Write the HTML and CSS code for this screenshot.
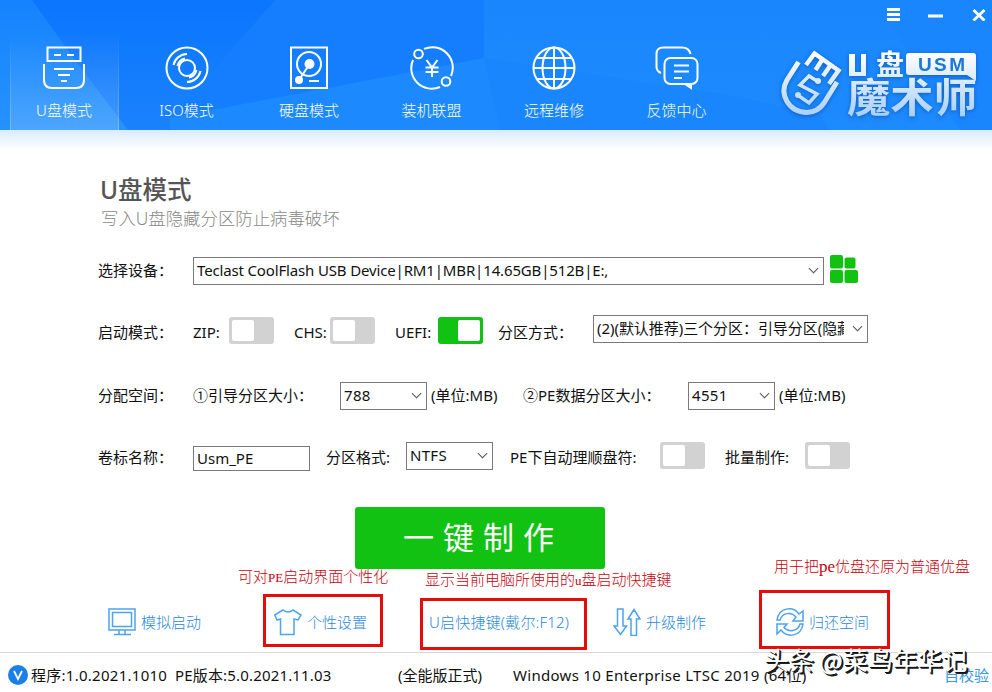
FILE: index.html
```html
<!DOCTYPE html>
<html lang="zh-CN">
<head>
    <meta charset="UTF-8">
    <meta name="viewport" content="width=device-width, initial-scale=1.0">
    <title>U盘魔术师</title>
    <link rel="stylesheet" href="styles.css">
</head>
<body>
    <header class="header">
        <svg class="header-bg" width="992" height="130" viewBox="0 0 992 130">
            <defs>
                <linearGradient id="base" x1="0" y1="0" x2="0" y2="1">
                    <stop offset="0" stop-color="#0b76fe"/>
                    <stop offset="1" stop-color="#1a82fc"/>
                </linearGradient>
                <linearGradient id="side" x1="0" y1="0" x2="0" y2="1">
                    <stop offset="0" stop-color="#1583fd"/>
                    <stop offset="1" stop-color="#2692fd"/>
                </linearGradient>
                <linearGradient id="right" x1="0" y1="0" x2="0" y2="1">
                    <stop offset="0" stop-color="#1a86fe"/>
                    <stop offset="1" stop-color="#1c8bfe"/>
                </linearGradient>
            </defs>
            <rect width="992" height="130" fill="url(#base)"/>
            <path d="M0 0H32L75 60L128 130H0Z" fill="url(#side)"/>
            <path d="M275 0H992V130H170L190 97Z" fill="#147efe"/>
            <path d="M484 0H992V130H484Z" fill="url(#right)"/>
            <path d="M170 118L380 78L484 58L600 75L640 130H170Z" fill="#1c89fe"/>
            <path d="M484 58L740 97L820 115L830 130H500Z" fill="#1a86fd"/>
            <path d="M875 0H992V130H960Z" fill="#1a86fe"/>
        </svg>
        <nav class="nav">
            <a class="nav-item active">
                <svg width="44" height="44" viewBox="0 0 44 44">
                    <path d="M5.500 1.500H38.500V15H5.500ZM12 9H19M25 9H32M2 18V34Q2 42 10 42H34Q42 42 42 34V18M12 23H32M16 29H28M19 35H25"/>
                </svg>
                <span>U盘模式</span>
            </a>
            <a class="nav-item">
                <svg width="44" height="44" viewBox="0 0 44 44">
                    <circle cx="22" cy="22" r="20.500"/><circle cx="22" cy="22" r="8"/>
                    <path d="M8.500 19A14 14 0 0 1 22 8M12.500 20A10 10 0 0 1 20 12.500M35.500 25A14 14 0 0 1 22 36M31.500 24A10 10 0 0 1 24 31.500"/>
                </svg>
                <span>ISO模式</span>
            </a>
            <a class="nav-item">
                <svg width="44" height="44" viewBox="0 0 44 44">
                    <path d="M4 1.500H40V42H4ZM22 19L12 34M22 35H32"/>
                    <circle cx="22" cy="18" r="12"/>
                    <circle class="solid" cx="22.500" cy="18" r="4"/><circle class="solid" cx="12" cy="34" r="3"/>
                </svg>
                <span>硬盘模式</span>
            </a>
            <a class="nav-item">
                <svg width="44" height="44" viewBox="0 0 44 44">
                    <path d="M14 2.900A20.500 20.500 0 0 1 41 30M30 41A20.500 20.500 0 0 1 3 14"/>
                    <circle cx="8.500" cy="8" r="4.300"/><circle cx="36" cy="35.500" r="4.300"/>
                    <path d="M16.500 14L22 21.500L27.500 14M22 21.500V31M15.500 21.500H28.500M15.500 26H28.500"/>
                </svg>
                <span>装机联盟</span>
            </a>
            <a class="nav-item">
                <svg width="44" height="44" viewBox="0 0 44 44">
                    <circle cx="22" cy="22" r="20.500"/><ellipse cx="22" cy="22" rx="11.500" ry="20.500"/>
                    <path d="M22 1.500V42.500M5 12H39M1.500 22H42.500M5 33H39"/>
                </svg>
                <span>远程维修</span>
            </a>
            <a class="nav-item">
                <svg width="44" height="44" viewBox="0 0 44 44">
                    <path d="M6 27Q1.500 25 1.500 21V8Q1.500 1.500 8 1.500H27Q34 1.500 35.500 8"/>
                    <rect x="9.500" y="12" width="33" height="26" rx="6"/>
                    <path d="M19 19.500H34M19 25.500H34M19 32H27"/>
                    <path class="solid" d="M30 38H36V42Z"/>
                </svg>
                <span>反馈中心</span>
            </a>
        </nav>
        <div class="win-buttons">
            <svg width="102" height="14" viewBox="0 0 102 14">
                <path d="M1 2.500H14M1 7.500H14M1 12.500H14M42 9H57" stroke-width="3"/>
                <path d="M87.500 3L98.500 13.500M98.500 3L87.500 13.500" stroke-width="2.800"/>
            </svg>
        </div>
        <svg class="logo" width="200" height="74" viewBox="0 0 200 74">
            <defs>
                <linearGradient id="silver" gradientUnits="userSpaceOnUse" x1="0" y1="4" x2="0" y2="68">
                    <stop offset="0" stop-color="#ffffff"/>
                    <stop offset="1" stop-color="#a9d0fb"/>
                </linearGradient>
            </defs>
            <g fill="none" stroke="url(#silver)">
                <path d="M18.500 14L7 32C-1 46 8 64 27 64.500Q38 64 44 55L57 34" stroke-width="5"/>
                <path d="M26 17L34.500 5.500L58.500 22.500L49 36M42 12L35.500 22M50 18L43 28" stroke-width="4.500"/>
                <path d="M37 33L29 28L20 37L37 46L29 55L19 48" stroke-width="3.500"/>
            </g>
            <g fill="url(#silver)">
                <circle cx="38" cy="33" r="3"/><circle cx="18" cy="47" r="3"/>
                <path d="M69 6H75V24H81V6H86V28H69Z"/>
                <text class="logo-pan" x="96" y="27">盘</text>
                <path d="M129 5H193Q196 5 196 8V33L187 27H129Q126 27 126 24V8Q126 5 129 5Z"/>
                <text class="logo-name" x="67" y="64" textLength="130" lengthAdjust="spacingAndGlyphs">魔术师</text>
            </g>
            <text class="logo-usm" x="138" y="23" textLength="47">USM</text>
        </svg>
    </header>

    <main class="main">
        <h1 class="title">U盘模式</h1>
        <p class="subtitle">写入U盘隐藏分区防止病毒破坏</p>

        <div class="row row-device">
            <label>选择设备：</label>
            <div class="select"><span class="t-device">Teclast CoolFlash USB Device|RM1|MBR|14.65GB|512B|E:,</span><i class="arrow"></i></div>
            <svg class="tiles" width="28" height="28" viewBox="0 0 28 28">
                <rect width="13" height="13.500" rx="2"/><rect x="14.500" y="2.500" width="11" height="11" rx="2"/>
                <rect y="15" width="13" height="13" rx="2"/><rect x="14.500" y="15" width="13.500" height="13" rx="2"/>
            </svg>
        </div>

        <div class="row row-boot">
            <label>启动模式：</label>
            <span>ZIP:</span><i class="toggle"></i>
            <span>CHS:</span><i class="toggle"></i>
            <span>UEFI:</span><i class="toggle on"></i>
            <span>分区方式：</span>
            <div class="select raised"><span class="t-part">(2)(默认推荐)三个分区：引导分区(隐藏)</span><i class="arrow"></i></div>
        </div>

        <div class="row row-space">
            <label>分配空间：</label>
            <span>①引导分区大小：</span>
            <div class="select"><span class="t-num">788</span><i class="arrow"></i></div>
            <span>(单位:MB)</span>
            <span>②PE数据分区大小：</span>
            <div class="select"><span class="t-num">4551</span><i class="arrow"></i></div>
            <span>(单位:MB)</span>
        </div>

        <div class="row row-volume">
            <label>卷标名称：</label>
            <div class="input">Usm_PE</div>
            <span>分区格式:</span>
            <div class="select raised"><span class="t-num">NTFS</span><i class="arrow"></i></div>
            <span>PE下自动理顺盘符:</span><i class="toggle"></i>
            <span>批量制作:</span><i class="toggle"></i>
        </div>

        <button class="make">一键制作</button>

        <div class="links">
            <a class="link">
                <svg width="28" height="28" viewBox="0 0 28 28"><path d="M1 1H27V22H1ZM4.500 4.500H23.500V18.500H4.500ZM11 22V26M17 22V26M6 26.500H23"/></svg>
                模拟启动
            </a>
            <a class="link">
                <svg width="28" height="28" viewBox="0 0 28 28"><path d="M9 2Q14 6 19 2L27 7L24 12L20 11V26.500H6.500V11L3 12L.700 7Z"/></svg>
                个性设置
            </a>
            <a class="link link-key">U启快捷键(戴尔:F12)</a>
            <a class="link">
                <svg width="28" height="28" viewBox="0 0 28 28"><path d="M4.500 1H10V18H13.500L7.500 26.500L1 18H4.500ZM18 27.500H23.500V11H27L21 1.500L15 11H18Z"/></svg>
                升级制作
            </a>
            <a class="link">
                <svg width="28" height="28" viewBox="0 0 28 28"><path d="M1 12C3-1 17-2 23 6L27 3V13H17L20 9C15 3 6 5 4 12ZM27 16C25 29 11 30 5 22L1 26V16H11L8 19.500C13 25 22 23 24 16Z"/></svg>
                归还空间
            </a>
        </div>
    </main>

    <footer class="footer">
        <svg width="20" height="20" viewBox="0 0 20 20"><circle cx="10" cy="10" r="10" fill="#1b7fe8"/><path d="M6 6L10 14L14 6" fill="none" stroke="#fff" stroke-width="1.800"/></svg>
        <span class="f-app">程序:1.0.2021.1010</span>
        <span class="f-pe">PE版本:5.0.2021.11.03</span>
        <span class="f-edition">(全能版正式)</span>
        <span class="f-os">Windows 10 Enterprise LTSC 2019 (64位)</span>
        <a class="f-check">自校验</a>
    </footer>

    <!-- red notes over the window -->
    <div class="note note-theme">可对<span>PE</span>启动界面个性化</div>
    <div class="note note-key">显示当前电脑所使用的<span>u</span>盘启动快捷键</div>
    <div class="note note-restore">用于把<span>pe</span>优盘还原为普通优盘</div>
    <div class="box box-theme"></div>
    <div class="box box-key"></div>
    <div class="box box-restore"></div>
    <div class="watermark">头条 @菜鸟年华记</div>
</body>
</html>
```
FILE: styles.css
```css
* {
    box-sizing: border-box;
}
body {
    width: 992px;
    height: 692px;
    margin: 0;
    position: relative;
    overflow: hidden;
    background: #fff;
    color: #111;
    font-family: "Noto Sans", "Noto Sans CJK SC", sans-serif;
    font-size: 15px;
    line-height: 20px;
    white-space: nowrap;
}
.header {
    height: 130px;
    position: relative;
}
.header-bg {
    position: absolute;
    top: 0;
    left: 0;
}
.nav {
    position: relative;
    display: flex;
    gap: 13.5px;
    padding-left: 9.5px;
}
.nav-item {
    width: 109px;
    height: 130px;
    padding-top: 46px;
    display: flex;
    flex-direction: column;
    align-items: center;
    gap: 10px;
    color: #fff;
}
.nav-item.active {
    background: linear-gradient(rgba(255, 255, 255, 0) 25%, rgba(255, 255, 255, 0.18));
    border: solid;
    border-width: 0 1px;
    border-image: linear-gradient(transparent 25%, rgba(255, 255, 255, 0.25)) 1;
}
.nav-item svg {
    flex: none;
    fill: none;
    stroke: #fff;
    stroke-width: 2;
}
.nav-item span {
    font-weight: 300;
}
.nav-item .solid {
    fill: #fff;
}
.win-buttons {
    position: absolute;
    top: 7px;
    left: 886px;
}
.win-buttons svg {
    display: block;
    stroke: #fff;
}
.logo {
    position: absolute;
    top: 48px;
    left: 780px;
    overflow: visible;
    filter: drop-shadow(0 1px 2px rgba(0, 50, 130, 0.5));
}
.logo-pan {
    font: 700 28px "Noto Sans CJK SC", sans-serif;
}
.logo-name {
    font: 700 40px "Noto Sans CJK SC", sans-serif;
}
.logo-usm {
    font: bold 19px "Liberation Sans", sans-serif;
    fill: #1b78d8;
}
.main {
    height: 522px;
    padding: 45px 0 0 98px;
    background: linear-gradient(#d9ebfd, #fff 20px);
}
.title {
    margin: 0 0 0 2px;
    font-size: 24.5px;
    font-weight: 500;
    line-height: 30px;
    color: #555;
}
.subtitle {
    margin: 3px 0 0 3px;
    font-size: 17.4px;
    font-weight: 300;
    color: #888;
}
.row {
    display: grid;
    align-items: center;
    height: 28px;
}
.row label,
.row span {
    position: relative;
    top: -1px;
}
.row-device {
    grid-template-columns: 95px 631px 28px;
    margin-top: 29px;
}
.row-device .tiles {
    margin: -4px 0 0 6px;
}
.row-boot {
    grid-template-columns: 95px 36px 65px 36px 65px 43px 60px 95px 275px;
    margin-top: 33px;
}
.row-boot > label,
.row-boot > span {
    top: 0;
}
.row-space {
    grid-template-columns: 95px 147px 91px 92px 165px 91px 80px;
    margin-top: 36px;
}
.row-volume {
    grid-template-columns: 95px 133px 80px 104px 150px 65px 80px 45px;
    margin-top: 34px;
}
.select,
.input {
    border: 1px solid #7a7a7a;
    background: #fff;
}
.select {
    height: 28px;
    padding: 0 5px 0 3px;
    display: flex;
    align-items: center;
    justify-content: space-between;
}
.row-space .select,
.row-volume .select {
    width: 87px;
}
.input {
    width: 117px;
    height: 25px;
    padding: 1px 3px;
}
.select.raised {
    position: relative;
    top: -2px;
}
.row-boot .select.raised {
    top: -3px;
}
.arrow {
    width: 7px;
    height: 7px;
    margin: -5px 1px 0 0;
    border: solid #555;
    border-width: 0 1px 1px 0;
    transform: rotate(45deg);
}
.t-device {
    letter-spacing: -0.15px;
}
.t-num {
    letter-spacing: 0.3px;
}
.t-part {
    width: 247px;
    overflow: hidden;
    letter-spacing: -0.05px;
}
.toggle {
    width: 45px;
    height: 27px;
    margin-top: -4px;
    padding: 3px;
    border-radius: 3px;
    background: #d2d2d2;
}
.row-volume .toggle {
    margin-top: -6px;
}
.toggle::before {
    content: "";
    display: block;
    width: 22px;
    height: 21px;
    border-radius: 2px;
    background: #fff;
}
.toggle.on {
    background: #12c212;
}
.toggle.on::before {
    margin-left: 17px;
}
.tiles {
    fill: #12c212;
}
.make {
    display: block;
    width: 250px;
    height: 62px;
    margin: 35px 0 0 257px;
    padding: 0 0 5px 6px;
    border: 0;
    border-radius: 3px;
    background: #12c212;
    color: #fff;
    font: 31px "Noto Sans CJK SC", sans-serif;
    letter-spacing: 9px;
}
.links {
    display: grid;
    grid-template-columns: 166px 155px 184px 163px 100px;
    margin: 39px 0 0 10px;
}
.link {
    height: 28px;
    display: flex;
    align-items: center;
    gap: 5px;
    color: #2a88dc;
    font-weight: 300;
}
.link-key {
    letter-spacing: 0.2px;
}
.link svg {
    fill: none;
    stroke: #4da3ee;
    stroke-width: 1.5;
}
.footer {
    height: 40px;
    padding: 5px 0 0 8px;
    border-top: 1px solid #d8d8d8;
    display: grid;
    grid-template-columns: 23px 144px 223px 115px 431px 48px;
    align-items: center;
}
.f-app {
    letter-spacing: 0.27px;
}
.f-pe {
    letter-spacing: 0.17px;
}
.f-os {
    letter-spacing: 0.3px;
}
.f-check {
    color: #3a96e8;
}
.note {
    position: absolute;
    color: #c8000c;
    font-family: "Noto Sans CJK SC", sans-serif;
    font-weight: 300;
}
.note span {
    font-family: "Liberation Serif", serif;
    font-size: 13px;
}
.note-theme {
    left: 238px;
    top: 566px;
}
.note-key {
    left: 425px;
    top: 569px;
}
.note-restore {
    left: 774px;
    top: 556px;
}
.note-restore span {
    font-size: 17px;
}
.box {
    position: absolute;
    border: 3px solid #e60c0c;
}
.box-theme {
    left: 263px;
    top: 594px;
    width: 120px;
    height: 53px;
}
.box-key {
    left: 420px;
    top: 598px;
    width: 167px;
    height: 52px;
}
.box-restore {
    left: 759px;
    top: 590px;
    width: 131px;
    height: 59px;
}
.watermark {
    position: absolute;
    left: 764px;
    top: 641px;
    color: #fff;
    font: 25px/36px "Noto Sans CJK SC", sans-serif;
    letter-spacing: -0.1px;
    text-shadow: 1px 1px 0 #111, 2px 2px 0 #222;
}
```
